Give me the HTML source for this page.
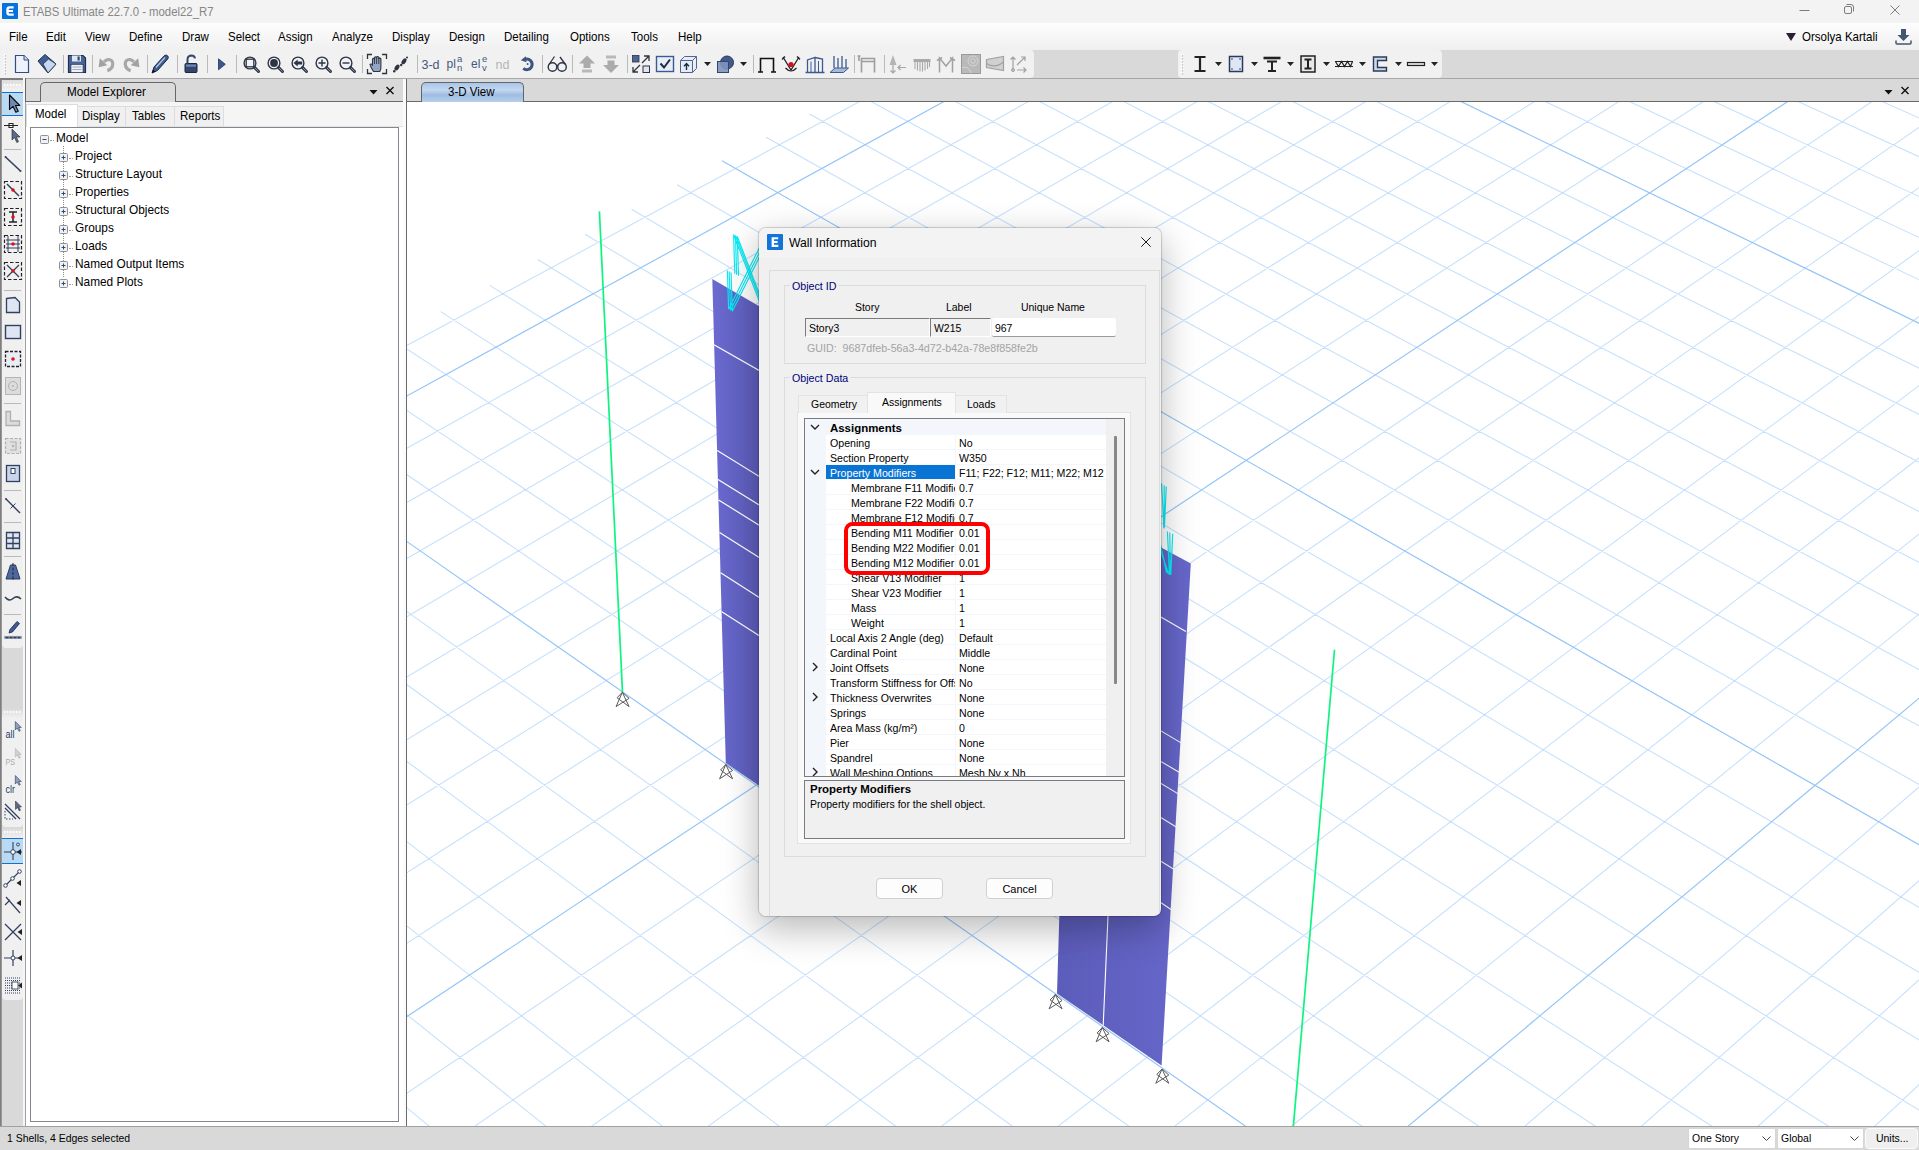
<!DOCTYPE html>
<html><head><meta charset="utf-8"><title>ETABS Ultimate 22.7.0 - model22_R7</title>
<style>

html,body{margin:0;padding:0}
body{width:1919px;height:1150px;position:relative;overflow:hidden;background:#d9d9d9;
 font-family:"Liberation Sans",sans-serif;font-size:12px;color:#000;line-height:1}
.a{position:absolute;white-space:nowrap}
svg{position:absolute;overflow:visible}
.ui{font-size:12.2px;transform:scaleX(.945);transform-origin:0 0}
.ms{font-size:11px;transform:scaleX(.95);transform-origin:0 0}
.msb{font-size:11px;font-weight:bold;transform:scaleX(1.04);transform-origin:0 0}
#title{left:0;top:0;width:1919px;height:23px;background:#f3f3f3}
#menu{left:0;top:23px;width:1919px;height:27px;background:linear-gradient(#fdfdfd,#f8f8f8 40%,#f0f0f0)}
#menu span{position:absolute;top:8px;font-size:12.2px;transform:scaleX(.945);transform-origin:0 0}
#tbrow{left:0;top:50px;width:1919px;height:28px;background:#d9d9d9}
.tb{position:absolute;top:0;height:28px;background:#f1f1f1;border-radius:0 4px 4px 0}
.sep{position:absolute;top:5px;width:1px;height:18px;background:#b9b9b9}
#dock{left:0;top:78px;width:1919px;height:24px;background:#d9d9d9}
#ltb{left:0;top:80px;width:26px;height:1046px;background:#d9d9d9}
#expl{left:26px;top:102px;width:377px;height:1024px;background:#fff}
#tree{left:30px;top:127px;width:367px;height:993px;background:#fff;border:1px solid #828790}
.tr{position:absolute;font-size:12.2px;transform:scaleX(.972);transform-origin:0 0}
#view{left:407px;top:102px;width:1512px;height:1024px;background:#fff;overflow:hidden}
#status{left:0;top:1126px;width:1919px;height:24px;background:#d9d9d9}
.combo{position:absolute;top:1.500px;height:19px;background:#fff;border:1px solid #d6d6d6;border-radius:2px;font-size:11px}
.combo span{position:absolute;left:3px;top:4px;transform:scaleX(.95);transform-origin:0 0}

#dlg{left:758px;top:227px;width:404px;height:690px;background:#f0f0f0;background-clip:padding-box;border:1px solid rgba(0,0,0,.13);border-radius:8px;
 box-sizing:border-box;overflow:hidden;box-shadow:0 12px 36px 0 rgba(0,0,0,.28),0 0 3px rgba(0,0,0,.05)}
#dlg .d{position:absolute;white-space:nowrap;font-size:11px}
#dlg span.d{transform:scaleX(.95);transform-origin:0 0}
#dlg span.b{font-weight:bold;transform:scaleX(1.04)}
.frame{position:absolute;border:1px solid #dcdcdc;box-sizing:border-box}
.gl{position:absolute;color:#00007a;font-size:11px;background:#f0f0f0;padding:0 2px;transform:scaleX(.97);transform-origin:0 0}
.tbx{position:absolute;box-sizing:border-box;height:19px;font-size:11px}
.tbx span{position:absolute;left:3px;top:5px;transform:scaleX(.95);transform-origin:0 0}
.row{position:absolute;left:0;width:301px;height:15px}
.row .n{position:absolute;left:21px;top:0;width:129px;height:14px;overflow:hidden;background:#fff}
.row .n span{position:absolute;top:3px;font-size:11px;transform:scaleX(.965);transform-origin:0 0}
.row .v{position:absolute;left:151px;top:0;width:150px;height:14px;overflow:hidden;background:#fff}
.row .v span{position:absolute;left:3px;top:3px;font-size:11px;transform:scaleX(.965);transform-origin:0 0}
.btn{position:absolute;box-sizing:border-box;height:21px;background:#fdfdfd;border:1px solid #d0d0d0;border-radius:4px;font-size:11px;text-align:center;line-height:21px}

</style></head><body>
<div class="a" id="title">
<svg style="left:2px;top:2.500px" width="16" height="16" viewBox="0 0 16 16"><rect width="16" height="16" rx=".8" fill="#0673dd"/><path d="M11.6 3.300H7.600Q4.300 3.300 4.300 6.500V9.500Q4.300 12.700 7.600 12.700H11.700V10.600H7.900Q6.700 10.600 6.700 9.400V9H11V7H6.700V6.600Q6.700 5.400 7.900 5.400H11.600Z" fill="#fff"/></svg>
<span class="a" style="left:23px;top:6px;font-size:12.3px;color:#868686;transform:scaleX(.924);transform-origin:0 0">ETABS Ultimate 22.7.0 - model22_R7</span>
<svg style="left:1790px;top:-1px" width="129" height="23"><g stroke="#7d7d7d" stroke-width="1" fill="none"><path d="M9.5 11.5H19.5"/><rect x="54.5" y="7.5" width="7" height="7" rx="1.5"/><path d="M56.5 5.5H61Q63.5 5.5 63.5 8V12.5"/><path d="M100.5 6.5L109.5 15.5M109.5 6.5L100.5 15.5"/></g></svg>
</div>
<div class="a" id="menu">
<span style="left:9px">File</span>
<span style="left:46px">Edit</span>
<span style="left:85px">View</span>
<span style="left:129px">Define</span>
<span style="left:182px">Draw</span>
<span style="left:228px">Select</span>
<span style="left:278px">Assign</span>
<span style="left:332px">Analyze</span>
<span style="left:392px">Display</span>
<span style="left:449px">Design</span>
<span style="left:504px">Detailing</span>
<span style="left:570px">Options</span>
<span style="left:631px">Tools</span>
<span style="left:678px">Help</span>
<svg style="left:1786px;top:10px" width="10" height="8"><path d="M0 0H10L5 8Z" fill="#2a2030"/></svg>
<span style="left:1802px">Orsolya Kartali</span>
<svg style="left:1894.500px;top:5px" width="18" height="18"><path d="M6 1H11V7H14.5L8.5 13L2.5 7H6Z" fill="#44566f"/><path d="M1 12.5V15Q1 16 2 16H15Q16 16 16 15V12.5" stroke="#44566f" stroke-width="1.5" fill="none"/></svg>
</div>
<div class="a" id="tbrow">
<div class="tb" style="left:0;width:1034px"></div>
<div class="tb" style="left:1178px;width:264px;border-radius:4px"></div>
<svg style="left:3px;top:4px" width="3" height="20"><path d="M1.5 0V20" stroke="#fff" stroke-width="2" stroke-dasharray="1.5 1.5"/><path d="M2.5 1V21" stroke="#bdbdbd" stroke-width="1" stroke-dasharray="1.5 1.5"/></svg>
<svg style="left:1180px;top:4px" width="3" height="20"><path d="M1.5 0V20" stroke="#fff" stroke-width="2" stroke-dasharray="1.5 1.5"/><path d="M2.5 1V21" stroke="#bdbdbd" stroke-width="1" stroke-dasharray="1.5 1.5"/></svg>
<div class="sep" style="left:62.5px"></div>
<div class="sep" style="left:91.5px"></div>
<div class="sep" style="left:146.5px"></div>
<div class="sep" style="left:176.5px"></div>
<div class="sep" style="left:206.5px"></div>
<div class="sep" style="left:236.0px"></div>
<div class="sep" style="left:362.0px"></div>
<div class="sep" style="left:416.5px"></div>
<div class="sep" style="left:542.0px"></div>
<div class="sep" style="left:572.0px"></div>
<div class="sep" style="left:626.5px"></div>
<div class="sep" style="left:752.5px"></div>
<div class="sep" style="left:854.0px"></div>
<div class="sep" style="left:884.0px"></div>
<svg style="left:10.0px;top:2px" width="24" height="24" viewBox="0 0 24 24"><path d="M5.5 3.5H14L18.5 8V20.5H5.5Z" fill="#eef3fb" stroke="#2d4f86" stroke-width="1.2"/><path d="M14 3.5V8H18.5" fill="#cdd9ec" stroke="#2d4f86" stroke-width="1"/></svg>
<svg style="left:35.0px;top:2px" width="24" height="24" viewBox="0 0 24 24"><path d="M3 9L10 2.5L21 12L13 21Z" fill="#3f5d92" stroke="#22324f" stroke-width="1"/><path d="M8 12L13.5 7L21 12L13 21Z" fill="#c8d6ee" stroke="#22324f" stroke-width=".8"/></svg>
<svg style="left:65.0px;top:2px" width="24" height="24" viewBox="0 0 24 24"><path d="M3.5 3.5H18L20.5 6V20.5H3.5Z" fill="#4a6496" stroke="#1f2f4f" stroke-width="1.2"/><rect x="7" y="3.5" width="9" height="6" fill="#dfe7f4"/><rect x="12.5" y="4.5" width="2.2" height="4" fill="#33466d"/><rect x="6" y="12.5" width="12" height="8" fill="#eef2f9" stroke="#1f2f4f" stroke-width=".6"/><path d="M7.5 15H16.5M7.5 17.5H16.5" stroke="#8b98b3" stroke-width=".8"/></svg>
<svg style="left:94.0px;top:2px" width="24" height="24" viewBox="0 0 24 24"><path d="M13.300 18.600C20.500 16.500 20.500 6.500 13.800 7.600Q11.800 8 10 9.800" fill="none" stroke="#a8a8a8" stroke-width="3.200"/><path d="M4.600 15.200L5.800 6.200L13.300 13.200Z" fill="#a2a2a2"/></svg>
<svg style="left:119.5px;top:2px" width="24" height="24" viewBox="0 0 24 24"><g transform="translate(24,0) scale(-1,1)"><path d="M13.300 18.600C20.500 16.500 20.500 6.500 13.800 7.600Q11.800 8 10 9.800" fill="none" stroke="#a8a8a8" stroke-width="3.200"/><path d="M4.600 15.200L5.800 6.200L13.300 13.200Z" fill="#a2a2a2"/></g></svg>
<svg style="left:148.0px;top:2px" width="24" height="24" viewBox="0 0 24 24"><path d="M4 21L6 15L16.5 3.5Q18.3 2.4 19.8 4Q21 5.7 19.7 7L9.5 18.5Z" fill="#3d5b92" stroke="#1c2b48" stroke-width="1"/><path d="M4 21L5.2 17.6L7.4 19.8Z" fill="#111"/><path d="M8 15.5L17 5.5" stroke="#b9c8e4" stroke-width="1.2"/></svg>
<svg style="left:179.0px;top:2px" width="24" height="24" viewBox="0 0 24 24"><rect x="6" y="11.5" width="12" height="9" rx="1" fill="#33466d" stroke="#1b2740" stroke-width="1"/><path d="M8.5 11.5V7.3Q8.8 3.6 12.5 3.6Q15.6 3.8 16 6.4" fill="none" stroke="#33466d" stroke-width="2"/><rect x="7" y="12.5" width="10" height="2.2" fill="#6f86b4"/></svg>
<svg style="left:209.0px;top:2px" width="24" height="24" viewBox="0 0 24 24"><path d="M9.500 6.800L16.300 12.300L9.500 17.800Z" fill="#3a5890" stroke="#22365f" stroke-width=".8"/></svg>
<svg style="left:239.5px;top:2px" width="24" height="24" viewBox="0 0 24 24"><g transform="translate(0,1)"><circle cx="10" cy="10" r="5.900" fill="#eef2f9" stroke="#2e3440" stroke-width="1.400"/><path d="M14.6 14.6L18.5 18.5" stroke="#2e3440" stroke-width="3" stroke-linecap="round"/><path d="M15.200 15.200L18.300 18.300" stroke="#7f97c0" stroke-width="1" stroke-linecap="round"/><rect x="6.2" y="6.2" width="7.6" height="7.6" fill="none" stroke="#2e3440" stroke-width="1.3"/></g></svg>
<svg style="left:264.0px;top:2px" width="24" height="24" viewBox="0 0 24 24"><g transform="translate(0,1)"><circle cx="10" cy="10" r="5.900" fill="#eef2f9" stroke="#2e3440" stroke-width="1.400"/><path d="M14.6 14.6L18.5 18.5" stroke="#2e3440" stroke-width="3" stroke-linecap="round"/><path d="M15.200 15.200L18.300 18.300" stroke="#7f97c0" stroke-width="1" stroke-linecap="round"/><circle cx="10" cy="10" r="3.9" fill="#2e3440"/></g></svg>
<svg style="left:288.2px;top:2px" width="24" height="24" viewBox="0 0 24 24"><g transform="translate(0,1)"><circle cx="10" cy="10" r="5.900" fill="#eef2f9" stroke="#2e3440" stroke-width="1.400"/><path d="M14.6 14.6L18.5 18.5" stroke="#2e3440" stroke-width="3" stroke-linecap="round"/><path d="M15.200 15.200L18.300 18.300" stroke="#7f97c0" stroke-width="1" stroke-linecap="round"/><path d="M5.5 10L9.7 6.4V8.6H14.2V11.4H9.7V13.6Z" fill="#2e3440"/></g></svg>
<svg style="left:312.2px;top:2px" width="24" height="24" viewBox="0 0 24 24"><g transform="translate(0,1)"><circle cx="10" cy="10" r="5.900" fill="#eef2f9" stroke="#2e3440" stroke-width="1.400"/><path d="M14.6 14.6L18.5 18.5" stroke="#2e3440" stroke-width="3" stroke-linecap="round"/><path d="M15.200 15.200L18.300 18.300" stroke="#7f97c0" stroke-width="1" stroke-linecap="round"/><path d="M6.5 10H13.5M10 6.5V13.5" stroke="#2e3440" stroke-width="1.4"/></g></svg>
<svg style="left:336.2px;top:2px" width="24" height="24" viewBox="0 0 24 24"><g transform="translate(0,1)"><circle cx="10" cy="10" r="5.900" fill="#eef2f9" stroke="#2e3440" stroke-width="1.400"/><path d="M14.6 14.6L18.5 18.5" stroke="#2e3440" stroke-width="3" stroke-linecap="round"/><path d="M15.200 15.200L18.300 18.300" stroke="#7f97c0" stroke-width="1" stroke-linecap="round"/><path d="M6.5 10H13.5" stroke="#2e3440" stroke-width="1.4"/></g></svg>
<svg style="left:364.7px;top:2px" width="24" height="24" viewBox="0 0 24 24"><path d="M2.5 7V2.5H7M17 2.5H21.5V7M21.5 17V21.5H17M7 21.5H2.5V17" fill="none" stroke="#2e3440" stroke-width="1.3"/><path d="M8.5 19.5Q5.5 15 5 12.5Q5.7 11.2 7.5 13V7Q8.5 5.8 9.5 7V5.5Q10.5 4.3 11.6 5.5V5Q12.7 4 13.8 5.3V6.5Q15 5.6 15.9 6.9V14Q16.2 17 14.8 19.5Z" fill="#93a5c4" stroke="#2e3440" stroke-width="1.1"/><path d="M9.5 7V12M11.6 5.5V12M13.8 6V12" stroke="#2e3440" stroke-width=".9"/></svg>
<svg style="left:389.0px;top:2px" width="24" height="24" viewBox="0 0 24 24"><ellipse cx="8" cy="15.5" rx="2" ry="3.3" transform="rotate(35 8 15.5)" fill="#2e3440"/><circle cx="5.2" cy="19.3" r="1.2" fill="#2e3440"/><ellipse cx="15" cy="9.3" rx="2" ry="3.3" transform="rotate(35 15 9.3)" fill="#2e3440"/><circle cx="12.2" cy="13" r="1.2" fill="#2e3440"/><circle cx="18" cy="5.5" r="1" fill="#2e3440"/></svg>
<span class="a" style="left:421.5px;top:8.500px;font-size:12.5px;color:#44587a">3-d</span>
<span class="a" style="left:446.5px;top:8px;font-size:12px;color:#44587a">pl</span><span class="a" style="left:457px;top:4px;font-size:9.500px;color:#44587a">a</span><span class="a" style="left:457px;top:12.500px;font-size:9.500px;color:#44587a">n</span>
<span class="a" style="left:471px;top:8px;font-size:12px;color:#44587a">el</span><span class="a" style="left:482px;top:4px;font-size:9.500px;color:#44587a">e</span><span class="a" style="left:482px;top:12.500px;font-size:9.500px;color:#44587a">v</span>
<span class="a" style="left:495.5px;top:8.500px;font-size:12.5px;color:#b5b5b5">nd</span>
<svg style="left:514.7px;top:2px" width="24" height="24" viewBox="0 0 24 24"><path d="M10.500 7.200A5.300 5.300 0 1 1 8.300 16.300" fill="none" stroke="#3f5580" stroke-width="3"/><path d="M5.800 8.300L10.800 4.200L11.500 10.200Z" fill="#3f5580"/><circle cx="12.600" cy="12" r="1" fill="#3f5580"/></svg>
<svg style="left:544.7px;top:2px" width="24" height="24" viewBox="0 0 24 24"><circle cx="7.5" cy="15" r="4.3" fill="#eef2f8" stroke="#2e3440" stroke-width="1.4"/><circle cx="17" cy="15" r="4.3" fill="#eef2f8" stroke="#2e3440" stroke-width="1.4"/><path d="M11.5 14Q12.3 12.8 13 14M4 12.5L9.5 4.5M20.5 12.5L15 5" fill="none" stroke="#2e3440" stroke-width="1.3"/></svg>
<svg style="left:574.7px;top:2px" width="24" height="24" viewBox="0 0 24 24"><path d="M12 3.5L20 11.5H15.5V16H8.5V11.5H4Z" fill="#ababab"/><rect x="7" y="17.5" width="10" height="3" fill="#b9b9b9"/></svg>
<svg style="left:598.7px;top:2px" width="24" height="24" viewBox="0 0 24 24"><path d="M12 21L20 13H15.5V8.5H8.5V13H4Z" fill="#ababab"/><rect x="7" y="3.5" width="10" height="3" fill="#b9b9b9"/></svg>
<svg style="left:629.0px;top:2px" width="24" height="24" viewBox="0 0 24 24"><rect x="3.5" y="3.5" width="6.5" height="6.5" fill="#4b6596" stroke="#2e3440" stroke-width=".8"/><rect x="14" y="14" width="6.5" height="6.5" fill="#dfe6f3" stroke="#2e3440" stroke-width="1"/><path d="M13 11L19.5 4.5M15 4H20V9M11 13L4.5 19.5M4 15V20H9" fill="none" stroke="#2e3440" stroke-width="1.3"/></svg>
<svg style="left:653.0px;top:2px" width="24" height="24" viewBox="0 0 24 24"><rect x="3.5" y="4.5" width="17" height="15" fill="#e8eef8" stroke="#3b5a93" stroke-width="1.4"/><path d="M7.5 11.5L11 15.5L17 7.5" fill="none" stroke="#1d2a45" stroke-width="2"/></svg>
<svg style="left:676.3px;top:2px" width="24" height="24" viewBox="0 0 24 24"><path d="M4.5 8.5H16.5V20.5H4.5ZM4.5 8.5L8.5 4.5H20.5L16.5 8.5M20.5 4.5V16.5L16.5 20.5" fill="#e6ecf6" stroke="#51658f" stroke-width="1"/><path d="M10.5 18V12M8 14.2L10.5 11.5L13 14.2" fill="none" stroke="#1d2a45" stroke-width="1.4"/></svg>
<svg style="left:703.8px;top:12px" width="7" height="4"><path d="M0 0H7L3.5 4Z" fill="#222"/></svg>
<svg style="left:713.0px;top:2px" width="24" height="24" viewBox="0 0 24 24"><rect x="4.5" y="9.5" width="11" height="11" fill="#7f93bd" stroke="#33466d" stroke-width="1"/><circle cx="14" cy="10.5" r="6.5" fill="#42598c" stroke="#263859" stroke-width="1"/><rect x="4.5" y="9.5" width="11" height="11" fill="#8ea0c6" fill-opacity=".75" stroke="#33466d" stroke-width="1"/></svg>
<svg style="left:739.8px;top:12px" width="7" height="4"><path d="M0 0H7L3.5 4Z" fill="#222"/></svg>
<svg style="left:754.7px;top:2px" width="24" height="24" viewBox="0 0 24 24"><path d="M5.5 20V6.5H18.5V20M3 20H8M16 20H21" fill="none" stroke="#111" stroke-width="1.6"/></svg>
<svg style="left:779.0px;top:2px" width="24" height="24" viewBox="0 0 24 24"><path d="M4 5L12 18L20 5M3 7.5L6 4.5M21 7.5L18 4.5" fill="none" stroke="#222" stroke-width="1.3"/><circle cx="12" cy="12.5" r="2.6" fill="#d4111b"/><path d="M6.5 16Q12 22 17.5 16" fill="none" stroke="#222" stroke-width="1.2"/></svg>
<svg style="left:803.0px;top:2px" width="24" height="24" viewBox="0 0 24 24"><path d="M4.5 20.5V8L12 5.5V20.5M12 5.5L19.5 7V20.5M2.5 20.5H21.5" fill="none" stroke="#3b5a93" stroke-width="1.3"/><path d="M8 20V9.5M15.5 20V9" stroke="#3b5a93" stroke-width="1"/></svg>
<svg style="left:827.3px;top:2px" width="24" height="24" viewBox="0 0 24 24"><path d="M3 20.5L8 16H21.5L16.5 20.5Z" fill="#a9b8d6" stroke="#3b5a93" stroke-width="1"/><path d="M7 4V16M11 6V16M15 4V16M19 7V16" stroke="#3b5a93" stroke-width="1.3"/></svg>
<svg style="left:856.3px;top:2px" width="24" height="24" viewBox="0 0 24 24"><path d="M5.5 20.5V6.5H18.5V20.5M5.5 9.5H18.5M3 4V9M1.5 4H4.5" fill="none" stroke="#9d9d9d" stroke-width="1.6"/></svg>
<svg style="left:885.3px;top:2px" width="24" height="24" viewBox="0 0 24 24"><path d="M8 3L11.5 13H4.5Z" fill="#b4b4b4"/><path d="M8 13V21M5.5 18.5L8 21L10.5 18.5M21 15.5H13M15.5 13L13 15.5L15.5 18" fill="none" stroke="#a5a5a5" stroke-width="1.2"/></svg>
<svg style="left:909.7px;top:2px" width="24" height="24" viewBox="0 0 24 24"><rect x="3.5" y="7" width="17" height="3" fill="#a9a9a9"/><path d="M5 10V17M7.5 10V18.5M10 10V19.5M12.5 10V19.5M15 10V18.5M17.500 10V17M19.500 10V15" stroke="#a9a9a9" stroke-width="1.1"/></svg>
<svg style="left:934.0px;top:2px" width="24" height="24" viewBox="0 0 24 24"><path d="M5.500 20.500V6L12 14L18.500 6V20.500M3 8.500L8 5.500M21 8.500L16 5.500" fill="none" stroke="#a1a1a1" stroke-width="1.5"/></svg>
<svg style="left:958.7px;top:2px" width="24" height="24" viewBox="0 0 24 24"><rect x="2.500" y="2.500" width="19" height="19" fill="#b9b9b9" stroke="#9a9a9a" stroke-width="1"/><circle cx="14" cy="9" r="5" fill="none" stroke="#d6d6d6" stroke-width="1"/><circle cx="14" cy="9" r="2.300" fill="none" stroke="#d6d6d6" stroke-width="1"/><path d="M3 16Q9 13 12 21" fill="none" stroke="#d6d6d6" stroke-width="1"/></svg>
<svg style="left:983.0px;top:2px" width="24" height="24" viewBox="0 0 24 24"><path d="M3.500 7.500L20.500 4.500V18.500L3.500 15.500Z" fill="#d0d0d0" stroke="#a1a1a1" stroke-width="1.2"/><path d="M3.500 11.500Q12 17 20.500 10" fill="none" stroke="#a1a1a1" stroke-width="1.2"/></svg>
<svg style="left:1006.3px;top:2px" width="24" height="24" viewBox="0 0 24 24"><path d="M7 20V5M4.500 7.500L7 5L9.500 7.500M11 18H20M17.500 15.500L20 18L17.500 20.500M11 13L19 5M15 5H19V9" fill="none" stroke="#a1a1a1" stroke-width="1.2"/><circle cx="7" cy="18" r="1.500" fill="none" stroke="#a1a1a1"/></svg>
<svg style="left:1187.6px;top:2px" width="24" height="24" viewBox="0 0 24 24"><path d="M6.500 5H17.500M6.500 19H17.500M12 5V19" stroke="#222" stroke-width="2.2" fill="none"/></svg>
<svg style="left:1214.6px;top:12px" width="7" height="4"><path d="M0 0H7L3.5 4Z" fill="#222"/></svg>
<svg style="left:1224.0px;top:2px" width="24" height="24" viewBox="0 0 24 24"><rect x="5.500" y="4.500" width="13" height="15" fill="#dfe6f3" stroke="#2a3b5c" stroke-width="1.5"/><circle cx="8" cy="7" r=".8" fill="#2a3b5c"/><circle cx="16" cy="7" r=".8" fill="#2a3b5c"/><circle cx="8" cy="17" r=".8" fill="#2a3b5c"/><circle cx="16" cy="17" r=".8" fill="#2a3b5c"/></svg>
<svg style="left:1250.6px;top:12px" width="7" height="4"><path d="M0 0H7L3.5 4Z" fill="#222"/></svg>
<svg style="left:1260.0px;top:2px" width="24" height="24" viewBox="0 0 24 24"><path d="M3.500 6H20.500" stroke="#222" stroke-width="2.600"/><path d="M7 9.500H17M12 9.500V19M8 19H16" stroke="#222" stroke-width="2" fill="none"/></svg>
<svg style="left:1287.0px;top:12px" width="7" height="4"><path d="M0 0H7L3.5 4Z" fill="#222"/></svg>
<svg style="left:1296.0px;top:2px" width="24" height="24" viewBox="0 0 24 24"><rect x="5" y="4" width="14" height="16" fill="#e8e8e8" stroke="#222" stroke-width="1.500"/><path d="M8.500 7.500H15.500M8.500 16.500H15.500M12 7.500V16.500" stroke="#222" stroke-width="2" fill="none"/></svg>
<svg style="left:1322.6px;top:12px" width="7" height="4"><path d="M0 0H7L3.5 4Z" fill="#222"/></svg>
<svg style="left:1332.0px;top:2px" width="24" height="24" viewBox="0 0 24 24"><path d="M3 9.500H21M3 14.500H21M3.500 9.500L6.500 14.500L9.500 9.500L12.500 14.500L15.500 9.500L18.500 14.500L20.500 9.500" stroke="#222" stroke-width="1.200" fill="none"/></svg>
<svg style="left:1359.0px;top:12px" width="7" height="4"><path d="M0 0H7L3.5 4Z" fill="#222"/></svg>
<svg style="left:1368.0px;top:2px" width="24" height="24" viewBox="0 0 24 24"><path d="M18.500 5H5.500V19H18.500V15.500H9.500V8.500H18.500Z" fill="#cfd8ea" stroke="#2a3b5c" stroke-width="1.400"/></svg>
<svg style="left:1395.0px;top:12px" width="7" height="4"><path d="M0 0H7L3.5 4Z" fill="#222"/></svg>
<svg style="left:1404.0px;top:2px" width="24" height="24" viewBox="0 0 24 24"><rect x="3.500" y="10.500" width="17" height="3" fill="#e0e0e0" stroke="#222" stroke-width="1.200"/></svg>
<svg style="left:1431.0px;top:12px" width="7" height="4"><path d="M0 0H7L3.5 4Z" fill="#222"/></svg>
</div>
<div class="a" id="dock">
<div class="a" style="left:25px;top:0;width:1894px;height:1px;background:#a6a6a6"></div>
<div class="a" style="left:403px;top:1px;width:3px;height:1047px;background:#fbfbfb"></div>
<div class="a" style="left:26px;top:23px;width:377px;height:1px;background:#6a6a6a"></div>
<div class="a" style="left:406px;top:23px;width:1513px;height:1px;background:#6a6a6a"></div>
<div class="a" style="left:40px;top:4px;width:134px;height:20px;background:#dbdbdb;border:1px solid #666;border-bottom:none;border-radius:5px 5px 0 0"></div>
<span class="a ui" style="left:67px;top:8px;transform:scaleX(.963)">Model Explorer</span>
<svg style="left:368.500px;top:11px" width="30" height="10"><path d="M0.5 1H8.5L4.5 5.500Z" fill="#111"/><path d="M17.500 -2L24.500 5M24.500 -2L17.500 5" stroke="#111" stroke-width="1.400"/></svg>
<div class="a" style="left:421px;top:4px;width:101px;height:20px;background:linear-gradient(#a9c5e7,#c3d8f0 35%,#9fbde2 60%,#b9d1ec);border:1px solid #5e6670;border-bottom:none;border-radius:5px 5px 0 0"></div>
<span class="a ui" style="left:448px;top:8px">3-D View</span>
<svg style="left:1884px;top:11px" width="30" height="10"><path d="M0.5 1H8.5L4.5 5.500Z" fill="#111"/><path d="M17.500 -2L24.500 5M24.500 -2L17.500 5" stroke="#111" stroke-width="1.400"/></svg>
</div>
<div class="a" id="ltb">
<div class="a" style="left:0;top:-2px;width:2px;height:1048px;background:linear-gradient(90deg,#747474,#a2a2a2)"></div>
<div class="a" style="left:0;top:-2px;width:24px;height:2px;background:#7c7c7c"></div>
<div class="a" style="left:23px;top:-2px;width:2px;height:1048px;background:#f6f6f6"></div>
<div class="a" style="left:25px;top:-2px;width:1px;height:1048px;background:#a0a0a0"></div>
<div class="a" style="left:25px;top:-2px;width:1px;height:24px;background:#666"></div>
<div class="a" style="left:2px;top:0;width:21px;height:568px;background:linear-gradient(#dcdcdc,#f0f0f0 9px);border-radius:0 0 4px 4px"></div>
<div class="a" style="left:2px;top:629px;width:21px;height:118px;background:linear-gradient(#dcdcdc,#f0f0f0 9px);border-radius:0 0 4px 4px"></div>
<div class="a" style="left:2px;top:749px;width:21px;height:171px;background:linear-gradient(#dcdcdc,#f0f0f0 9px);border-radius:0 0 4px 4px"></div>
<svg style="left:4px;top:4px" width="18" height="3"><path d="M0 1H18" stroke="#fff" stroke-width="2" stroke-dasharray="1.500 1.500"/></svg>
<svg style="left:4px;top:631px" width="18" height="3"><path d="M0 1H18" stroke="#fff" stroke-width="2" stroke-dasharray="1.500 1.500"/></svg>
<svg style="left:4px;top:751px" width="18" height="3"><path d="M0 1H18" stroke="#fff" stroke-width="2" stroke-dasharray="1.500 1.500"/></svg>
<div class="a" style="left:4px;top:69px;width:17px;height:1px;background:#b9b9b9"></div>
<div class="a" style="left:4px;top:210px;width:17px;height:1px;background:#b9b9b9"></div>
<div class="a" style="left:4px;top:323px;width:17px;height:1px;background:#b9b9b9"></div>
<div class="a" style="left:4px;top:410px;width:17px;height:1px;background:#b9b9b9"></div>
<div class="a" style="left:4px;top:442px;width:17px;height:1px;background:#b9b9b9"></div>
<div class="a" style="left:4px;top:476px;width:17px;height:1px;background:#b9b9b9"></div>
<div class="a" style="left:4px;top:534px;width:17px;height:1px;background:#b9b9b9"></div>
<div class="a" style="left:2px;top:12px;width:21px;height:24px;background:#badaf4;border-top:1px solid #0a74d4;border-bottom:1px solid #0a74d4;box-sizing:border-box"></div>
<div class="a" style="left:2px;top:758px;width:21px;height:26px;background:#badaf4;border-top:1px solid #0a74d4;border-bottom:1px solid #0a74d4;box-sizing:border-box"></div>
<svg style="left:.5px;top:11.0px" width="24" height="24" viewBox="0 0 24 24"><path d="M8.500 4V18.500L12 15.300L14.800 21.300L17.300 20.200L14.500 14.500H18.800Z" fill="#7189b0" stroke="#0c0c0c" stroke-width="1.100" stroke-linejoin="round"/></svg>
<svg style="left:.5px;top:41.0px" width="24" height="24" viewBox="0 0 24 24"><path d="M3 4.500H17M8 2.500H12V6.500H8Z" fill="#fff" stroke="#222" stroke-width="1.100"/><path d="M11 8V19L13.500 16.500L15.800 21.500L17.500 20.700L15.400 16H19Z" fill="#5a6a8a" stroke="#222" stroke-width=".6"/></svg>
<svg style="left:.5px;top:72.0px" width="24" height="24" viewBox="0 0 24 24"><path d="M4.500 5L19.500 19" stroke="#33415e" stroke-width="1.600"/><circle cx="4.500" cy="5" r="1" fill="#33415e"/><circle cx="19.500" cy="19" r="1" fill="#33415e"/></svg>
<svg style="left:.5px;top:98.0px" width="24" height="24" viewBox="0 0 24 24"><rect x="3.5" y="3.500" width="17" height="17" fill="none" stroke="#222" stroke-width="1.200" stroke-dasharray="3.500 2"/><path d="M6 6L18 18" stroke="#33415e" stroke-width="1.500"/><circle cx="12" cy="12" r="1.800" fill="#e0101c"/></svg>
<svg style="left:.5px;top:125.0px" width="24" height="24" viewBox="0 0 24 24"><rect x="3.5" y="3.500" width="17" height="17" fill="none" stroke="#222" stroke-width="1.200" stroke-dasharray="3.500 2"/><path d="M8 7H16M8 17H16M12 7V17" stroke="#222" stroke-width="1.500"/><circle cx="12" cy="12" r="1.800" fill="#e0101c"/></svg>
<svg style="left:.5px;top:152.0px" width="24" height="24" viewBox="0 0 24 24"><rect x="3.5" y="3.500" width="17" height="17" fill="none" stroke="#222" stroke-width="1.200" stroke-dasharray="3.500 2"/><path d="M5 8H19M5 12H19M5 16H19M7 4V20M17 4V20" stroke="#33415e" stroke-width="1"/><circle cx="12" cy="12" r="1.800" fill="#e0101c"/></svg>
<svg style="left:.5px;top:179.0px" width="24" height="24" viewBox="0 0 24 24"><rect x="3.5" y="3.500" width="17" height="17" fill="none" stroke="#222" stroke-width="1.200" stroke-dasharray="3.500 2"/><path d="M6 6L18 18M18 6L6 18" stroke="#33415e" stroke-width="1.300"/><circle cx="12" cy="12" r="1.800" fill="#e0101c"/></svg>
<svg style="left:.5px;top:213.0px" width="24" height="24" viewBox="0 0 24 24"><path d="M5.500 5.500L14 4.500L18.500 9V19.500H5.500Z" fill="#dfe6f3" stroke="#33415e" stroke-width="1.300"/></svg>
<svg style="left:.5px;top:240.0px" width="24" height="24" viewBox="0 0 24 24"><rect x="4.500" y="5.500" width="15" height="13" fill="#dfe6f3" stroke="#33415e" stroke-width="1.400"/></svg>
<svg style="left:.5px;top:267.0px" width="24" height="24" viewBox="0 0 24 24"><rect x="4.500" y="4.500" width="15" height="15" fill="#e8edf6" stroke="#222" stroke-width="1.300" stroke-dasharray="3 1.500"/><circle cx="12" cy="12" r="1.800" fill="#e0101c"/></svg>
<svg style="left:.5px;top:294.0px" width="24" height="24" viewBox="0 0 24 24"><rect x="4.500" y="3.500" width="15" height="17" fill="#dcdcdc" stroke="#b5b5b5" stroke-width="1"/><circle cx="12" cy="12" r="4.500" fill="none" stroke="#b0b0b0" stroke-width="1"/><circle cx="12" cy="12" r="1" fill="#b0b0b0"/></svg>
<svg style="left:.5px;top:326.0px" width="24" height="24" viewBox="0 0 24 24"><path d="M5 5.500H9.500V15H18.500V19.500H5Z" fill="#dcdcdc" stroke="#b0b0b0" stroke-width="1.300"/></svg>
<svg style="left:.5px;top:354.0px" width="24" height="24" viewBox="0 0 24 24"><rect x="4.500" y="4.500" width="15" height="15" fill="#e1e1e1" stroke="#b0b0b0" stroke-width="1.200" stroke-dasharray="3 1.500"/><path d="M9 8H15V16H9" fill="none" stroke="#b0b0b0" stroke-width="1.200"/><circle cx="12" cy="12" r="1.200" fill="#b0b0b0"/></svg>
<svg style="left:.5px;top:381.0px" width="24" height="24" viewBox="0 0 24 24"><rect x="5.500" y="4.500" width="13" height="16" fill="#c9d5ea" stroke="#33415e" stroke-width="1.300"/><rect x="10" y="7.500" width="4" height="5" fill="#fff" stroke="#33415e" stroke-width="1"/></svg>
<svg style="left:.5px;top:414.0px" width="24" height="24" viewBox="0 0 24 24"><path d="M5 5L19 19" stroke="#33415e" stroke-width="1.400"/><path d="M9.500 14.500L14.500 9.500M10 10L14 14" stroke="#33415e" stroke-width="1"/><circle cx="5" cy="5" r="1" fill="#33415e"/></svg>
<svg style="left:.5px;top:448.0px" width="24" height="24" viewBox="0 0 24 24"><path d="M5.500 4.500H18.500V20.500H5.500ZM12 4.500V20.500M5.500 10H18.500M5.500 15.500H18.500" fill="#dfe6f3" stroke="#33415e" stroke-width="1.300"/></svg>
<svg style="left:.5px;top:480.0px" width="24" height="24" viewBox="0 0 24 24"><path d="M9.500 5H14.500L19 19H5Z" fill="#4e68a0" stroke="#2a3b5c" stroke-width="1"/><path d="M12 3V21" stroke="#222" stroke-width="1" stroke-dasharray="3 1.500"/></svg>
<svg style="left:.5px;top:507.0px" width="24" height="24" viewBox="0 0 24 24"><path d="M4 10Q8 15 12 11.500Q16 8 20 12" fill="none" stroke="#33415e" stroke-width="1.600"/></svg>
<svg style="left:.5px;top:538.0px" width="24" height="24" viewBox="0 0 24 24"><path d="M8 15L9 11.500L16 3.500L18.500 5.500L11.500 14Z" fill="#3d5b92" stroke="#1c2b48" stroke-width=".8"/><path d="M3.500 19.500H20.500" stroke="#33415e" stroke-width="2.200"/><path d="M4 17.500V21M8 17.500V21M12 17.500V21M16 17.500V21M20 17.500V21" stroke="#9fb0cf" stroke-width=".8"/></svg>
<svg style="left:.5px;top:638.0px" width="24" height="24" viewBox="0 0 24 24"><text x="4.400" y="20.200" font-family="Liberation Sans,sans-serif" font-size="11.500" textLength="9" lengthAdjust="spacingAndGlyphs" fill="#2a3b5c">all</text><path d="M14.3 3.5v8.500l2-2l1.700 3.300l1.300-.6l-1.600-3.200h2.600z" fill="#8aa0c4" stroke="#1a2438" stroke-width=".5"/></svg>
<svg style="left:.5px;top:665.0px" width="24" height="24" viewBox="0 0 24 24"><text x="4.400" y="20.300" font-family="Liberation Sans,sans-serif" font-size="8.500" textLength="9.500" lengthAdjust="spacingAndGlyphs" fill="#a9a9a9">PS</text><path d="M14.3 3.5v8.500l2-2l1.700 3.300l1.300-.6l-1.600-3.200h2.600z" fill="#cfcfcf" stroke="#aaa" stroke-width=".5"/></svg>
<svg style="left:.5px;top:692.0px" width="24" height="24" viewBox="0 0 24 24"><text x="4.400" y="20.500" font-family="Liberation Sans,sans-serif" font-size="11.500" textLength="9.500" lengthAdjust="spacingAndGlyphs" fill="#2a3b5c">clr</text><path d="M14.3 3.5v8.500l2-2l1.700 3.300l1.300-.6l-1.600-3.200h2.600z" fill="#8aa0c4" stroke="#1a2438" stroke-width=".5"/></svg>
<svg style="left:.5px;top:719.0px" width="24" height="24" viewBox="0 0 24 24"><path d="M4 5L19 20M4 9L15 20" stroke="#33415e" stroke-width="1.300"/><path d="M4 12V20H12" fill="none" stroke="#33415e" stroke-width="1" stroke-dasharray="1.500 1.500"/><path d="M14.5 2v8.500l2-2l1.700 3.300l1.300-.6l-1.600-3.200h2.600z" fill="#5a6a8a" stroke="#222" stroke-width=".5"/></svg>
<svg style="left:.5px;top:759.0px" width="24" height="24" viewBox="0 0 24 24"><path d="M3 13H21M12 3V21" stroke="#33415e" stroke-width="1.100"/><circle cx="12" cy="13" r="2.300" fill="#fff" stroke="#33415e" stroke-width="1"/><path d="M20 10L15.500 13L20 16Z" fill="#222"/><circle cx="17" cy="5.500" r="1.500" fill="none" stroke="#33415e" stroke-width=".9"/></svg>
<svg style="left:.5px;top:786.0px" width="24" height="24" viewBox="0 0 24 24"><path d="M4 20L19 5" stroke="#33415e" stroke-width="1.100"/><circle cx="4.500" cy="19.500" r="1.800" fill="#fff" stroke="#33415e"/><circle cx="11.500" cy="12.500" r="1.800" fill="#fff" stroke="#33415e"/><circle cx="18.500" cy="5.500" r="1.800" fill="#fff" stroke="#33415e"/><path d="M20 14L15.500 17L20 20Z" fill="#222"/></svg>
<svg style="left:.5px;top:813.0px" width="24" height="24" viewBox="0 0 24 24"><path d="M5 4L19 20M4 12L9 7" stroke="#33415e" stroke-width="1.200"/><path d="M20 7L15.500 10L20 13Z" fill="#222"/></svg>
<svg style="left:.5px;top:840.0px" width="24" height="24" viewBox="0 0 24 24"><path d="M4 4L20 20M20 4L4 20" stroke="#33415e" stroke-width="1.300"/><path d="M21 9L16.500 12L21 15Z" fill="#222"/></svg>
<svg style="left:.5px;top:866.0px" width="24" height="24" viewBox="0 0 24 24"><path d="M3 12H21M12 4V20" stroke="#33415e" stroke-width="1.200"/><circle cx="12" cy="12" r="2" fill="#fff" stroke="#33415e"/><path d="M21 9L16.500 12L21 15Z" fill="#222"/></svg>
<svg style="left:.5px;top:893.0px" width="24" height="24" viewBox="0 0 24 24"><path d="M4 5H20M4 7.500H20M4 10H20M4 12.500H20M4 15H20M4 17.500H20M4 20H20" stroke="#33415e" stroke-width="1" stroke-dasharray="1 1"/><rect x="11" y="9" width="6" height="7" fill="#fff" stroke="#33415e" stroke-width=".9"/><path d="M21 9.500L17 12.500L21 15.500Z" fill="#222"/></svg>
</div>
<div class="a" id="expl"></div>
<div class="a" style="left:26px;top:102px;width:377px;height:24px;background:#f5f5f5"></div>
<div class="a" style="left:26px;top:126px;width:377px;height:1px;background:#e3e3e3"></div>
<div class="a" style="left:77.0px;top:106px;width:49.0px;height:20px;background:#f0f0f0;border:1px solid #dcdcdc;border-bottom:none;box-sizing:border-box"></div>
<span class="a ui" style="left:82.0px;top:110px">Display</span>
<div class="a" style="left:125.0px;top:106px;width:49.5px;height:20px;background:#f0f0f0;border:1px solid #dcdcdc;border-bottom:none;box-sizing:border-box"></div>
<span class="a ui" style="left:132.0px;top:110px">Tables</span>
<div class="a" style="left:173.5px;top:106px;width:50.5px;height:20px;background:#f0f0f0;border:1px solid #dcdcdc;border-bottom:none;box-sizing:border-box"></div>
<span class="a ui" style="left:180.0px;top:110px">Reports</span>
<div class="a" style="left:26.0px;top:104px;width:52.0px;height:23px;background:#fff;border:1px solid #dcdcdc;border-bottom:none;box-sizing:border-box"></div>
<span class="a ui" style="left:34.500px;top:108px">Model</span>
<div class="a" id="tree">
<svg style="left:8.5px;top:7.0px" width="9" height="9"><rect x=".5" y=".5" width="8" height="8" rx="1" fill="#f1f1f1" stroke="#919191"/><path d="M2.500 4.500H6.500" stroke="#274a8f" stroke-width="1"/></svg>
<div class="a" style="left:19px;top:11.500px;width:4px;border-top:1px dotted #a0a0a0"></div>
<span class="tr" style="left:24.500px;top:4px">Model</span>
<div class="a" style="left:31.500px;top:18px;height:131px;border-left:1px dotted #8c8c8c"></div>
<svg style="left:27.5px;top:25.0px" width="9" height="9"><rect x=".5" y=".5" width="8" height="8" rx="1" fill="#f1f1f1" stroke="#919191"/><path d="M2.500 4.500H6.500M4.500 2.500V6.500" stroke="#274a8f" stroke-width="1"/></svg>
<div class="a" style="left:38px;top:29.5px;width:4px;border-top:1px dotted #a0a0a0"></div>
<span class="tr" style="left:44px;top:22px">Project</span>
<svg style="left:27.5px;top:43.0px" width="9" height="9"><rect x=".5" y=".5" width="8" height="8" rx="1" fill="#f1f1f1" stroke="#919191"/><path d="M2.500 4.500H6.500M4.500 2.500V6.500" stroke="#274a8f" stroke-width="1"/></svg>
<div class="a" style="left:38px;top:47.5px;width:4px;border-top:1px dotted #a0a0a0"></div>
<span class="tr" style="left:44px;top:40px">Structure Layout</span>
<svg style="left:27.5px;top:61.0px" width="9" height="9"><rect x=".5" y=".5" width="8" height="8" rx="1" fill="#f1f1f1" stroke="#919191"/><path d="M2.500 4.500H6.500M4.500 2.500V6.500" stroke="#274a8f" stroke-width="1"/></svg>
<div class="a" style="left:38px;top:65.5px;width:4px;border-top:1px dotted #a0a0a0"></div>
<span class="tr" style="left:44px;top:58px">Properties</span>
<svg style="left:27.5px;top:79.0px" width="9" height="9"><rect x=".5" y=".5" width="8" height="8" rx="1" fill="#f1f1f1" stroke="#919191"/><path d="M2.500 4.500H6.500M4.500 2.500V6.500" stroke="#274a8f" stroke-width="1"/></svg>
<div class="a" style="left:38px;top:83.5px;width:4px;border-top:1px dotted #a0a0a0"></div>
<span class="tr" style="left:44px;top:76px">Structural Objects</span>
<svg style="left:27.5px;top:97.0px" width="9" height="9"><rect x=".5" y=".5" width="8" height="8" rx="1" fill="#f1f1f1" stroke="#919191"/><path d="M2.500 4.500H6.500M4.500 2.500V6.500" stroke="#274a8f" stroke-width="1"/></svg>
<div class="a" style="left:38px;top:101.5px;width:4px;border-top:1px dotted #a0a0a0"></div>
<span class="tr" style="left:44px;top:94px">Groups</span>
<svg style="left:27.5px;top:115.0px" width="9" height="9"><rect x=".5" y=".5" width="8" height="8" rx="1" fill="#f1f1f1" stroke="#919191"/><path d="M2.500 4.500H6.500M4.500 2.500V6.500" stroke="#274a8f" stroke-width="1"/></svg>
<div class="a" style="left:38px;top:119.5px;width:4px;border-top:1px dotted #a0a0a0"></div>
<span class="tr" style="left:44px;top:112px">Loads</span>
<svg style="left:27.5px;top:133.0px" width="9" height="9"><rect x=".5" y=".5" width="8" height="8" rx="1" fill="#f1f1f1" stroke="#919191"/><path d="M2.500 4.500H6.500M4.500 2.500V6.500" stroke="#274a8f" stroke-width="1"/></svg>
<div class="a" style="left:38px;top:137.5px;width:4px;border-top:1px dotted #a0a0a0"></div>
<span class="tr" style="left:44px;top:130px">Named Output Items</span>
<svg style="left:27.5px;top:151.0px" width="9" height="9"><rect x=".5" y=".5" width="8" height="8" rx="1" fill="#f1f1f1" stroke="#919191"/><path d="M2.500 4.500H6.500M4.500 2.500V6.500" stroke="#274a8f" stroke-width="1"/></svg>
<div class="a" style="left:38px;top:155.5px;width:4px;border-top:1px dotted #a0a0a0"></div>
<span class="tr" style="left:44px;top:148px">Named Plots</span>
</div>
<div class="a" style="left:406px;top:79px;width:1px;height:1047px;background:#6a6a6a"></div>
<div class="a" id="view"><svg style="left:1px;top:0" width="1511" height="1024" viewBox="0 0 1511 1024">
<path d="M528.7 -42.0L-1549.4 1078.0M694.8 -42.0L-1312.7 1078.0M777.8 -42.0L-1194.4 1078.0M860.9 -42.0L-1076.0 1078.0M944.0 -42.0L-957.7 1078.0M1027.0 -42.0L-839.3 1078.0M1110.1 -42.0L-721.0 1078.0M1193.1 -42.0L-602.6 1078.0M1276.2 -42.0L-484.3 1078.0M1359.3 -42.0L-365.9 1078.0M1525.4 -42.0L-129.2 1078.0M1608.4 -42.0L-10.9 1078.0M1691.5 -42.0L107.5 1078.0M1774.6 -42.0L225.8 1078.0M1857.6 -42.0L344.2 1078.0M1940.7 -42.0L462.5 1078.0M2023.8 -42.0L580.9 1078.0M2106.8 -42.0L699.2 1078.0M2189.9 -42.0L817.6 1078.0M2356.0 -42.0L1054.3 1078.0M2439.1 -42.0L1172.6 1078.0M2522.1 -42.0L1291.0 1078.0M2605.2 -42.0L1409.3 1078.0M2688.2 -42.0L1527.7 1078.0M2771.3 -42.0L1646.0 1078.0M2854.4 -42.0L1764.4 1078.0M2937.4 -42.0L1882.7 1078.0M3020.5 -42.0L2001.1 1078.0M3186.6 -42.0L2237.8 1078.0M3269.7 -42.0L2356.2 1078.0M3352.7 -42.0L2474.5 1078.0M3435.8 -42.0L2592.9 1078.0M3518.8 -42.0L2711.2 1078.0M3601.9 -42.0L2829.6 1078.0M3685.0 -42.0L2947.9 1078.0M3768.0 -42.0L3066.3 1078.0M3851.1 -42.0L3184.6 1078.0M4017.2 -42.0L3421.3 1078.0M4100.3 -42.0L3539.7 1078.0M4183.3 -42.0L3658.0 1078.0M4266.4 -42.0L3776.4 1078.0M4349.5 -42.0L3894.7 1078.0M4432.5 -42.0L4013.1 1078.0M4515.6 -42.0L4131.4 1078.0M4598.6 -42.0L4249.8 1078.0M4681.7 -42.0L4368.1 1078.0M4847.8 -42.0L4604.8 1078.0M4930.9 -42.0L4723.2 1078.0M5013.9 -42.0L4841.5 1078.0M5097.0 -42.0L4959.9 1078.0M5180.1 -42.0L5078.2 1078.0M5263.1 -42.0L5196.6 1078.0M5346.2 -42.0L5314.9 1078.0M5429.2 -42.0L5433.3 1078.0M-2114.9 1360.8L-2279.5 1078.0M-2019.1 1309.5L-2161.2 1078.0M-1925.8 1259.4L-2042.9 1078.0M-1834.8 1210.7L-1924.6 1078.0M-1746.0 1163.1L-1806.3 1078.0M-1659.4 1116.7L-1688.0 1078.0M-1574.9 1071.3L-1569.7 1078.0M-1411.7 983.9L-1333.1 1078.0M-1333.0 941.6L-1214.8 1078.0M-1256.0 900.4L-1096.5 1078.0M-1180.8 860.1L-978.2 1078.0M-1107.2 820.7L-859.9 1078.0M-1035.3 782.1L-741.6 1078.0M-965.0 744.4L-623.3 1078.0M-896.2 707.5L-505.0 1078.0M-828.8 671.4L-386.7 1078.0M-698.3 601.5L-150.1 1078.0M-635.1 567.6L-31.8 1078.0M-573.2 534.4L86.5 1078.0M-512.5 501.9L204.8 1078.0M-453.1 470.0L323.1 1078.0M-394.8 438.8L441.4 1078.0M-337.7 408.2L559.7 1078.0M-281.7 378.1L678.1 1078.0M-226.8 348.7L796.4 1078.0M-120.1 291.5L1033.0 1078.0M-68.2 263.7L1151.3 1078.0M-17.3 236.4L1269.6 1078.0M32.6 209.6L1387.9 1078.0M81.7 183.4L1506.2 1078.0M129.8 157.5L1624.5 1078.0M177.1 132.2L1742.8 1078.0M223.6 107.3L1861.1 1078.0M269.2 82.8L1979.4 1078.0M358.1 35.2L2216.0 1078.0M401.4 12.0L2334.3 1078.0M444.0 -10.8L2452.6 1078.0M485.8 -33.3L2570.9 1078.0M527.0 -55.3L2689.2 1078.0M567.4 -77.0L2807.5 1078.0M607.2 -98.4L2925.8 1078.0M646.4 -119.4L3044.1 1078.0M684.9 -140.0L3162.4 1078.0M760.1 -180.3L3399.0 1078.0M796.8 -200.0L3517.4 1078.0M832.9 -219.4L3635.7 1078.0M868.5 -238.4L3754.0 1078.0M903.5 -257.2L3872.3 1078.0M938.0 -275.7L3990.6 1078.0M972.0 -293.9L4108.9 1078.0M1005.4 -311.8L4227.2 1078.0M1038.4 -329.5L4345.5 1078.0M1102.8 -364.0L4582.1 1078.0M1134.3 -380.9L4700.4 1078.0M1165.4 -397.5L4818.7 1078.0M1196.0 -414.0L4937.0 1078.0M1226.1 -430.1L5055.3 1078.0M1255.9 -446.1L5173.6 1078.0M1285.2 -461.8L5291.9 1078.0M1314.1 -477.3L5410.2 1078.0M1342.6 -492.5L5528.5 1078.0M1398.4 -522.5L5765.1 1078.0M1425.8 -537.1L5883.4 1078.0" stroke="#c6e0fc" stroke-width="1.08" fill="none"/>
<path d="M611.7 -42.0L-1431.1 1078.0M1442.3 -42.0L-247.6 1078.0M2272.9 -42.0L935.9 1078.0M3103.5 -42.0L2119.5 1078.0M3934.2 -42.0L3303.0 1078.0M4764.8 -42.0L4486.5 1078.0M-1492.3 1027.1L-1451.4 1078.0M-762.9 636.1L-268.4 1078.0M-172.9 319.8L914.7 1078.0M314.0 58.8L2097.7 1078.0M722.8 -160.3L3280.7 1078.0M1070.8 -346.9L4463.8 1078.0M1370.7 -507.6L5646.8 1078.0" stroke="#96c6f7" stroke-width="1.2" fill="none"/>
<defs><linearGradient id="wg" x1="0" x2="1" y1="0" y2="0"><stop offset="0" stop-color="#6a6ad0"/><stop offset="1" stop-color="#5b5bb9"/></linearGradient><linearGradient id="wg2" x1="0" x2="1" y1="0" y2="0"><stop offset="0" stop-color="#5c5cba"/><stop offset="1" stop-color="#6767cb"/></linearGradient></defs>
<polygon points="304.3,177.1 362.0,210.5 362.0,691.0 317.8,661.0" fill="url(#wg)"/>
<path d="M306.0 242.7L362.0 274.7M309.2 348.4L362.0 381.1M310.0 377.5L362.0 409.7M310.6 398.0L362.0 429.9M311.5 430.4L362.0 462.2M312.6 470.7L362.0 502.3M313.8 509.7L362.0 540.5" stroke="#fff" stroke-width="1.2" fill="none"/>
<polygon points="742.0,439.5 782.8,461.4 753.6,963.4 649.0,891.4 651.8,798.0 742.0,798.0" fill="url(#wg2)"/>
<path d="M742.0 508.8L777.9 529.5M742.0 622.4L773.1 640.9M742.0 653.1L771.6 670.5M742.0 674.8L770.2 691.9M742.0 708.7L768.2 725.0M742.0 752.5L765.8 767.3M742.0 793.2L763.4 807.7M700.5 803.0L695.2 923.5" stroke="#fff" stroke-width="1.1" fill="none"/>
<path d="M326.8 171.8L325.6 132.5L357.0 214.0M319.4 168.5L320.6 207.3L357.0 134.5M328.6 172.8L327.5 133.5L358.9 215.0M321.2 169.5L322.5 208.3L358.9 135.5M330.5 173.8L329.3 134.5L360.7 216.0M323.1 170.5L324.3 209.3L360.7 136.5M750.5 382.0L753.7 382.0L755.8 426.0M756.2 383.5L756.2 426.5M758.3 384.5L756.4 425.0M759.4 429.5L761.4 472.5M761.8 430.4L762.3 473.0M764.7 431.9L762.8 473.0M750.0 430.7L758.5 470.6M750.0 436.5L759.9 471.6M750.0 442.0L761.0 472.5" stroke="#06eaf4" stroke-width="1.15" fill="none" stroke-linejoin="miter"/>
<path d="M191.4 109.4L214.5 590.2M926.5 547.8L885.3 1025.0" stroke="#0cf57e" stroke-width="1.7" fill="none"/>
<path d="M214.3 590.3L208.1 604.6M214.3 590.3L221.1 604.6M214.3 590.3L209.1 595.8M214.3 590.3L221.1 596.3M209.1 595.8L221.1 604.6M221.1 596.3L208.1 604.6" stroke="#5a5a5a" stroke-width="1" fill="none"/>
<path d="M317.8 662.5L311.6 676.8M317.8 662.5L324.6 676.8M317.8 662.5L312.6 668.0M317.8 662.5L324.6 668.5M312.6 668.0L324.6 676.8M324.6 668.5L311.6 676.8" stroke="#5a5a5a" stroke-width="1" fill="none"/>
<path d="M647.3 892.5L641.1 906.8M647.3 892.5L654.1 906.8M647.3 892.5L642.1 898.0M647.3 892.5L654.1 898.5M642.1 898.0L654.1 906.8M654.1 898.5L641.1 906.8" stroke="#5a5a5a" stroke-width="1" fill="none"/>
<path d="M694.3 925.5L688.1 939.8M694.3 925.5L701.1 939.8M694.3 925.5L689.1 931.0M694.3 925.5L701.1 931.5M689.1 931.0L701.1 939.8M701.1 931.5L688.1 939.8" stroke="#5a5a5a" stroke-width="1" fill="none"/>
<path d="M754.0 967.0L747.8 981.3M754.0 967.0L760.8 981.3M754.0 967.0L748.8 972.5M754.0 967.0L760.8 973.0M748.8 972.5L760.8 981.3M760.8 973.0L747.8 981.3" stroke="#5a5a5a" stroke-width="1" fill="none"/>
</svg></div>
<div class="a" id="status">
<div class="a" style="left:0;top:0;width:1919px;height:1px;background:#a0a0a0"></div>
<span class="a ms" style="left:7px;top:7px">1 Shells, 4 Edges selected</span>
<div class="combo" style="left:1688px;width:86px"><span>One Story</span><svg style="right:4px;top:7px" width="9" height="6"><path d="M.5 .5L4.500 4.500L8.500 .5" fill="none" stroke="#444" stroke-width="1"/></svg></div>
<div class="combo" style="left:1777px;width:85px"><span>Global</span><svg style="right:4px;top:7px" width="9" height="6"><path d="M.5 .5L4.500 4.500L8.500 .5" fill="none" stroke="#444" stroke-width="1"/></svg></div>
<div class="combo" style="left:1865px;width:51px;background:#efefef;border-color:#fbfbfb;border-radius:4px"><span style="left:9.500px">Units...</span></div>
</div>
<div class="a" id="dlg">
<div class="d" style="left:0;top:0;width:404px;height:30px;background:#f3f3f3"></div>
<svg style="left:8px;top:6px" width="16" height="16"><rect width="16" height="16" rx="1" fill="#1274d8"/><path d="M4.6 3.2H11.2V5.3H7V7H10.6V9H7V10.8H11.3V12.9H4.6Z" fill="#fff"/></svg>
<span class="d" style="left:30px;top:9px;font-size:12.3px;transform:scaleX(.99)">Wall Information</span>
<svg style="left:382px;top:9px" width="10" height="10"><path d="M.3 .3L9.700 9.700M9.700 .3L.3 9.700" stroke="#1a1a1a" stroke-width="1"/></svg>
<div class="frame" style="left:10px;top:42px;width:391px;height:700px"></div>
<div class="frame" style="left:25px;top:57px;width:362px;height:79px"></div>
<span class="gl" style="left:31px;top:53px">Object ID</span>
<span class="d" style="left:96px;top:74px">Story</span>
<span class="d" style="left:187px;top:74px">Label</span>
<span class="d" style="left:262px;top:74px">Unique Name</span>
<div class="tbx" style="left:46px;top:90px;width:125px;border-left:1px solid #7a7a7a;border-top:1px solid #7a7a7a;border-right:1px solid #fff;border-bottom:1px solid #fff"><span style="top:4px">Story3</span></div>
<div class="tbx" style="left:171px;top:90px;width:61px;border-left:1px solid #7a7a7a;border-top:1px solid #7a7a7a;border-right:1px solid #fff;border-bottom:1px solid #fff"><span style="top:4px">W215</span></div>
<div class="tbx" style="left:233px;top:90px;width:124px;background:#fff;border-bottom:1px solid #9a9a9a;border-radius:2px"><span>967</span></div>
<span class="d" style="left:48px;top:115px;color:#a3a3a3;transform:scaleX(.97)">GUID:&nbsp; 9687dfeb-56a3-4d72-b42a-78e8f858fe2b</span>
<div class="frame" style="left:25px;top:149px;width:362px;height:480px"></div>
<span class="gl" style="left:31px;top:145px">Object Data</span>
<div class="frame" style="left:38px;top:184px;width:334px;height:432px;background:#f9f9f9;border-color:#e3e3e3"></div>
<div class="frame" style="left:39px;top:167px;width:70px;height:18px;border-bottom:none;background:#f1f1f1;border-color:#e3e3e3"></div>
<div class="frame" style="left:196px;top:167px;width:52px;height:18px;border-bottom:none;background:#f1f1f1;border-color:#e3e3e3"></div>
<div class="frame" style="left:108px;top:164px;width:89px;height:21px;border-bottom:none;background:#f9f9f9;border-color:#e3e3e3"></div>
<span class="d" style="left:52px;top:171px">Geometry</span>
<span class="d" style="left:123px;top:169px">Assignments</span>
<span class="d" style="left:208px;top:171px">Loads</span>
<div class="d" style="left:45px;top:190px;width:321px;height:359px;background:#fff;border:1px solid #787c82;box-sizing:border-box;overflow:hidden">
<div class="d" style="left:0;top:0;width:301px;height:357px;background:#f3f6fb"></div>
<span class="d b" style="left:24.500px;top:4px">Assignments</span>
<svg style="left:5px;top:5px" width="10" height="7"><path d="M1 1L5 5L9 1" fill="none" stroke="#222" stroke-width="1.400"/></svg>
<div class="row" style="top:16px"><div class="n"><span style="left:3.5px">Opening</span></div><div class="v"><span>No</span></div></div>
<div class="row" style="top:31px"><div class="n"><span style="left:3.5px">Section Property</span></div><div class="v"><span>W350</span></div></div>
<div class="row" style="top:46px"><div class="n" style="background:#0a74d4;color:#fff"><span style="left:3.5px;top:3px">Property Modifiers</span></div><div class="v"><span>F11; F22; F12; M11; M22; M12</span></div></div>
<svg style="left:5px;top:50px" width="10" height="7"><path d="M1 1L5 5L9 1" fill="none" stroke="#222" stroke-width="1.400"/></svg>
<div class="row" style="top:61px"><div class="n"><span style="left:24.5px">Membrane F11 Modifier</span></div><div class="v"><span>0.7</span></div></div>
<div class="row" style="top:76px"><div class="n"><span style="left:24.5px">Membrane F22 Modifier</span></div><div class="v"><span>0.7</span></div></div>
<div class="row" style="top:91px"><div class="n"><span style="left:24.5px">Membrane F12 Modifier</span></div><div class="v"><span>0.7</span></div></div>
<div class="row" style="top:106px"><div class="n"><span style="left:24.5px">Bending M11 Modifier</span></div><div class="v"><span>0.01</span></div></div>
<div class="row" style="top:121px"><div class="n"><span style="left:24.5px">Bending M22 Modifier</span></div><div class="v"><span>0.01</span></div></div>
<div class="row" style="top:136px"><div class="n"><span style="left:24.5px">Bending M12 Modifier</span></div><div class="v"><span>0.01</span></div></div>
<div class="row" style="top:151px"><div class="n"><span style="left:24.5px">Shear V13 Modifier</span></div><div class="v"><span>1</span></div></div>
<div class="row" style="top:166px"><div class="n"><span style="left:24.5px">Shear V23 Modifier</span></div><div class="v"><span>1</span></div></div>
<div class="row" style="top:181px"><div class="n"><span style="left:24.5px">Mass</span></div><div class="v"><span>1</span></div></div>
<div class="row" style="top:196px"><div class="n"><span style="left:24.5px">Weight</span></div><div class="v"><span>1</span></div></div>
<div class="row" style="top:211px"><div class="n"><span style="left:3.5px">Local Axis 2 Angle (deg)</span></div><div class="v"><span>Default</span></div></div>
<div class="row" style="top:226px"><div class="n"><span style="left:3.5px">Cardinal Point</span></div><div class="v"><span>Middle</span></div></div>
<div class="row" style="top:241px"><div class="n"><span style="left:3.5px">Joint Offsets</span></div><div class="v"><span>None</span></div></div>
<svg style="left:7px;top:243px" width="7" height="10"><path d="M1 1L5 5L1 9" fill="none" stroke="#222" stroke-width="1.400"/></svg>
<div class="row" style="top:256px"><div class="n"><span style="left:3.5px">Transform Stiffness for Offsets</span></div><div class="v"><span>No</span></div></div>
<div class="row" style="top:271px"><div class="n"><span style="left:3.5px">Thickness Overwrites</span></div><div class="v"><span>None</span></div></div>
<svg style="left:7px;top:273px" width="7" height="10"><path d="M1 1L5 5L1 9" fill="none" stroke="#222" stroke-width="1.400"/></svg>
<div class="row" style="top:286px"><div class="n"><span style="left:3.5px">Springs</span></div><div class="v"><span>None</span></div></div>
<div class="row" style="top:301px"><div class="n"><span style="left:3.5px">Area Mass (kg/m&#178;)</span></div><div class="v"><span>0</span></div></div>
<div class="row" style="top:316px"><div class="n"><span style="left:3.5px">Pier</span></div><div class="v"><span>None</span></div></div>
<div class="row" style="top:331px"><div class="n"><span style="left:3.5px">Spandrel</span></div><div class="v"><span>None</span></div></div>
<div class="row" style="top:346px"><div class="n"><span style="left:3.5px">Wall Meshing Options</span></div><div class="v"><span>Mesh Nv x Nh</span></div></div>
<svg style="left:7px;top:348px" width="7" height="10"><path d="M1 1L5 5L1 9" fill="none" stroke="#222" stroke-width="1.400"/></svg>
<div class="d" style="left:301px;top:0;width:18px;height:357px;background:#f0f0f0"></div>
<div class="d" style="left:309.300px;top:17px;width:2.600px;height:248px;background:#888;border-radius:1px"></div>
</div>
<div class="d" style="left:45px;top:552px;width:321px;height:59px;border:1px solid #787c82;box-sizing:border-box;background:#f0f0f0"></div>
<span class="d b" style="left:51px;top:556px">Property Modifiers</span>
<span class="d" style="left:51px;top:571px">Property modifiers for the shell object.</span>
<div class="btn" style="left:117px;top:650px;width:67px">OK</div>
<div class="btn" style="left:227px;top:650px;width:67px">Cancel</div>
<div class="d" style="left:85.1px;top:294.1px;width:146.200px;height:53px;border:4.400px solid #fe0000;border-radius:8.500px;box-sizing:border-box"></div>
</div>
</body></html>
